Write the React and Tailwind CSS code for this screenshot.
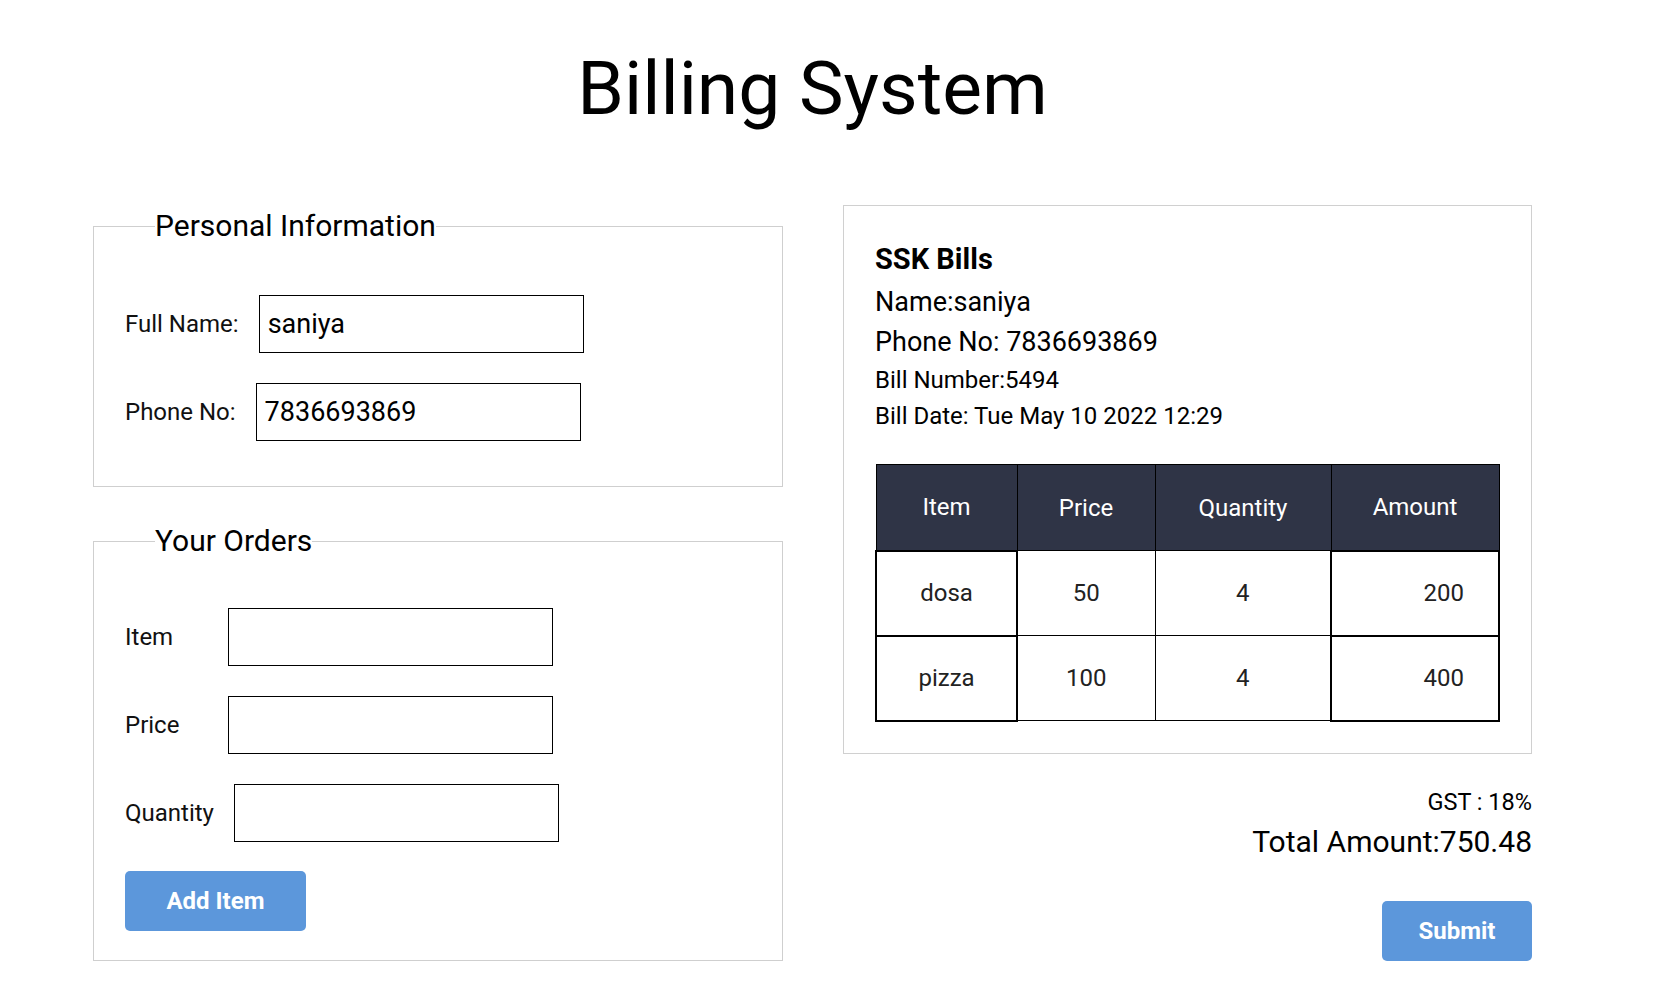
import React, { useState } from 'react';

// bill rows shown in the preview table
const ORDERS = [
    { item: 'dosa', price: 50, qty: 4 },
    { item: 'pizza', price: 100, qty: 4 }
];

function Field({ label, value, onChange }) {
    return (
        <div className="flex items-center">
            <label className="min-w-[83px] mr-[20px] text-[24px] leading-none text-[#111]">{label}</label>
            <input
                value={value}
                onChange={(e) => onChange(e.target.value)}
                className="h-[58px] w-[325px] border border-black px-[8px] text-[27px] text-black outline-none"
            />
        </div>
    );
}

export default function App() {
    const [name, setName] = useState('saniya');
    const [phone, setPhone] = useState('7836693869');
    const [item, setItem] = useState('');
    const [price, setPrice] = useState('');
    const [qty, setQty] = useState('');

    return (
        <div className="min-h-screen bg-white font-['Roboto',sans-serif] text-black">
            <div className="ml-[93px] w-[1439px] pt-[51px]">
                <h1 className="text-center text-[75px] leading-none font-normal">Billing System</h1>

                <div className="mt-[79px] flex items-start gap-[60px]">
                    {/* left: forms */}
                    <div className="w-[690px] mt-[3px]">
                        <fieldset className="border border-[#cfcfcf] px-[31px] pt-[51px] pb-[45px]">
                            <legend className="ml-[30px] text-[30px] leading-[36px]">Personal Information</legend>
                            <div className="flex flex-col gap-[30px]">
                                <Field label="Full Name:" value={name} onChange={setName} />
                                <Field label="Phone No:" value={phone} onChange={setPhone} />
                            </div>
                        </fieldset>

                        <fieldset className="mt-[36px] border border-[#cfcfcf] px-[31px] pt-[49px] pb-[29px]">
                            <legend className="ml-[30px] text-[30px] leading-[36px]">Your Orders</legend>
                            <div className="flex flex-col gap-[30px]">
                                <Field label="Item" value={item} onChange={setItem} />
                                <Field label="Price" value={price} onChange={setPrice} />
                                <Field label="Quantity" value={qty} onChange={setQty} />
                            </div>
                            <button className="mt-[29px] h-[60px] w-[181px] rounded-[5px] bg-[#5c97db] text-[24px] font-bold text-white">
                                Add Item
                            </button>
                        </fieldset>
                    </div>

                    {/* right: bill preview */}
                    <div className="w-[689px]">
                        <div className="border border-[#d0d0d0] px-[31px] pt-[31px] pb-[31px]">
                            <h2 className="text-[29px] font-bold leading-[45px]">SSK Bills</h2>
                            <p className="text-[27px] leading-[40px]">Name:{name}</p>
                            <p className="text-[27px] leading-[40px]">Phone No: {phone}</p>
                            <p className="text-[24px] leading-[36px]">Bill Number:5494</p>
                            <p className="text-[24px] leading-[36px]">Bill Date: Tue May 10 2022 12:29</p>

                            <table className="mt-[30px] w-full border-collapse border border-black text-[24px]">
                                <colgroup>
                                    <col className="w-[141px]" />
                                    <col className="w-[138px]" />
                                    <col className="w-[176px]" />
                                    <col />
                                </colgroup>
                                <thead>
                                    <tr className="h-[86px] bg-[#2f3446] text-white">
                                        <th className="border border-black font-normal">Item</th>
                                        <th className="border border-black font-normal">Price</th>
                                        <th className="border border-black font-normal">Quantity</th>
                                        <th className="border border-black font-normal">Amount</th>
                                    </tr>
                                </thead>
                                <tbody className="text-[#222]">
                                    {ORDERS.map((o) => (
                                        <tr key={o.item} className="h-[85px]">
                                            <td className="border-2 border-black text-center">{o.item}</td>
                                            <td className="border border-black text-center">{o.price}</td>
                                            <td className="border border-black text-center">{o.qty}</td>
                                            <td className="border-2 border-black pr-[34px] text-right">{o.price * o.qty}</td>
                                        </tr>
                                    ))}
                                </tbody>
                            </table>
                        </div>

                        <div className="mt-[31px] flex flex-col items-end">
                            <p className="text-[23.5px] leading-[34px]">GST : 18%</p>
                            <p className="mt-[3px] text-[30px] leading-[40px]">Total Amount:750.48</p>
                            <button className="mt-[39px] h-[60px] w-[150px] rounded-[5px] bg-[#5c97db] text-[24px] font-bold text-white">
                                Submit
                            </button>
                        </div>
                    </div>
                </div>
            </div>
        </div>
    );
}
